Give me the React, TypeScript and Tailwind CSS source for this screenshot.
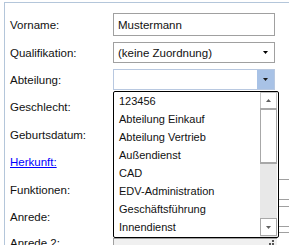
import React from 'react';

const items = [
    '123456',
    'Abteilung Einkauf',
    'Abteilung Vertrieb',
    'Außendienst',
    'CAD',
    'EDV-Administration',
    'Geschäftsführung',
    'Innendienst',
];

const Arrow = ({ up = false, color = '#000' }: { up?: boolean; color?: string }) => (
    <svg width="5" height="3" viewBox="0 0 5 3">
        <polygon points={up ? '0,3 5,3 2.5,0' : '0,0 5,0 2.5,3'} fill={color} />
    </svg>
);

const Label = ({ children, link }: { children: React.ReactNode; link?: boolean }) => (
    <div className={`w-[108px] shrink-0 pl-[5px] ${link ? 'text-[#0000ff] underline' : ''}`}>
        {children}
    </div>
);

export default function App() {
    return (
        <div
            className="relative w-[289px] h-[245px] overflow-hidden bg-white text-[11.5px] leading-[14px] text-[#111]"
            style={{ fontFamily: '"Liberation Sans", Arial, sans-serif' }}
        >
            {/* Group frame */}
            <div className="ml-[4px] mt-[2px] h-[260px] border-l border-t border-[#b4c6da] pt-[10px]">
                <div className="flex items-center h-[23px]">
                    <Label>Vorname:</Label>
                    <div className="w-[162px] h-[23px] border border-[#a0a0a0] flex items-center pl-[4px]">Mustermann</div>
                </div>

                <div className="flex items-center h-[21px] mt-[6px]">
                    <Label>Qualifikation:</Label>
                    <div className="w-[162px] h-[21px] border border-[#a0a0a0] flex items-center pl-[4px]">
                        <span className="flex-1">(keine Zuordnung)</span>
                        <span className="w-[17px] flex justify-center"><Arrow /></span>
                    </div>
                </div>

                <div className="flex items-center h-[21px] mt-[6px]">
                    <Label>Abteilung:</Label>
                    <div className="w-[162px] h-[21px] border border-[#b8c8e0] flex">
                        <span className="flex-1" />
                        <span className="w-[17px] bg-[#a8c2e6] flex items-center justify-center"><Arrow color="#1a1a1a" /></span>
                    </div>
                </div>

                <div className="flex items-center h-[20px] mt-[7px]">
                    <Label>Geschlecht:</Label>
                    <div className="w-[162px] h-[20px] border border-[#a0a0a0]" />
                </div>
                <div className="flex items-center h-[20px] mt-[8px]">
                    <Label>Geburtsdatum:</Label>
                    <div className="w-[162px] h-[20px] border border-[#a0a0a0]" />
                </div>
                <div className="flex items-center h-[20px] mt-[7px]">
                    <Label link>Herkunft:</Label>
                    <div className="w-[162px] h-[20px] border border-[#a0a0a0]" />
                </div>
                <div className="flex items-center h-[21px] mt-[7px]">
                    <Label>Funktionen:</Label>
                    <div className="w-[190px] h-[21px] border-y border-[#a0a0a0]" />
                </div>
                <div className="flex items-center h-[21px] mt-[6px]">
                    <Label>Anrede:</Label>
                    <div className="w-[190px] h-[21px] border-y border-[#a0a0a0]" />
                </div>
                <div className="flex items-start mt-[5px]">
                    <div className="pt-[4px]"><Label>Anrede 2:</Label></div>
                    <div className="w-[190px] border-t border-[#a0a0a0]">
                        <div className="mt-[5px] w-[164px] h-[20px] bg-[#f0f0f0] border-l border-t border-[#a0a0a0] flex justify-end pr-[3px] pt-[1px]">
                            <svg width="5" height="5" viewBox="0 0 5 5">
                                <rect x="3" y="0" width="2" height="2" fill="#555" />
                                <rect x="0" y="3" width="2" height="2" fill="#555" />
                                <rect x="3" y="3" width="2" height="2" fill="#555" />
                            </svg>
                        </div>
                    </div>
                </div>
            </div>

            {/* Open dropdown list */}
            <div className="absolute left-[113px] top-[91px] w-[166px] h-[147px] border border-black rounded-[2px] bg-white flex text-[11px]">
                <div className="flex-1">
                    {items.map((item) => (
                        <div key={item} className="h-[18px] flex items-center pl-[5px]">{item}</div>
                    ))}
                </div>
                <div className="w-[17px] mr-[1px] flex flex-col">
                    <div className="h-[16px] border border-b-0 border-[#c4c4c4] flex items-center justify-center">
                        <Arrow up color="#606060" />
                    </div>
                    <div className="h-[56px] border-[2px] border-x-[1px] border-[#a8a8a8] bg-white" />
                    <div className="flex-1 bg-[#e8e8e8]" />
                    <div className="h-[18px] border border-[#a8a8a8] bg-white flex items-center justify-center">
                        <Arrow color="#606060" />
                    </div>
                    <div className="h-[1px] bg-[#e8e8e8]" />
                </div>
            </div>
        </div>
    );
}
